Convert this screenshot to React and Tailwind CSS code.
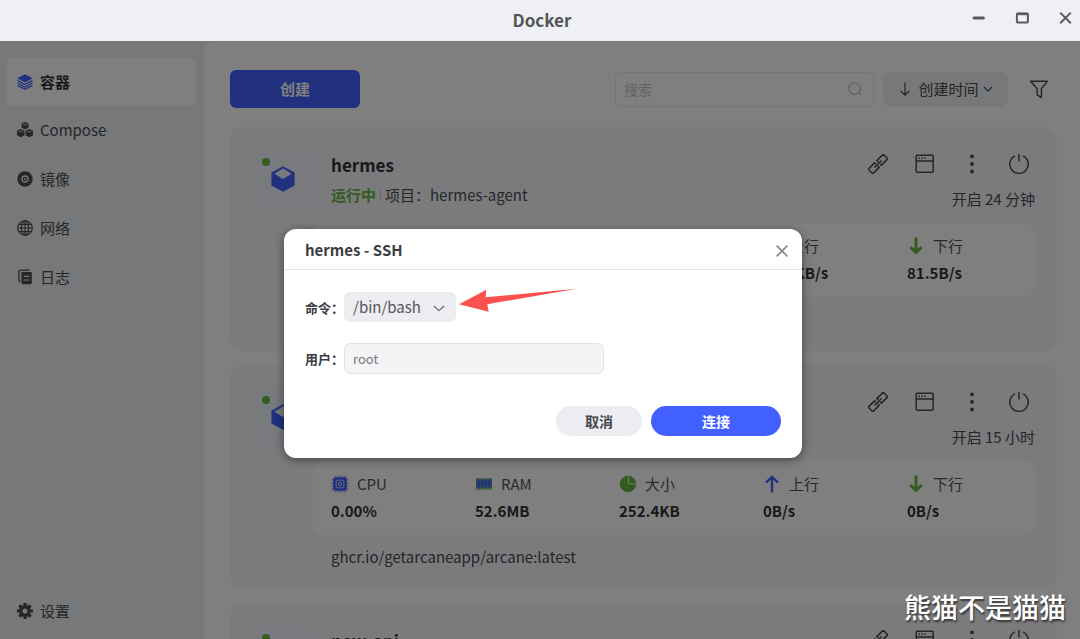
import React, { useState } from 'react';

const navItems = [
  { key: 'containers', label: '容器', icon: LayersIcon },
  { key: 'compose', label: 'Compose', icon: ComposeIcon },
  { key: 'images', label: '镜像', icon: DiscIcon },
  { key: 'networks', label: '网络', icon: GlobeIcon },
  { key: 'logs', label: '日志', icon: LogIcon },
];

const containers = [
  {
    name: 'hermes',
    project: 'hermes-agent',
    uptime: '开启 24 分钟',
    image: 'nousresearch/hermes-agent:latest',
    cpu: '0.12%',
    ram: '218.4MB',
    size: '1.2GB',
    up: '12.4KB/s',
    down: '81.5B/s',
  },
  {
    name: 'arcane',
    project: 'arcane',
    uptime: '开启 15 小时',
    image: 'ghcr.io/getarcaneapp/arcane:latest',
    cpu: '0.00%',
    ram: '52.6MB',
    size: '252.4KB',
    up: '0B/s',
    down: '0B/s',
  },
  {
    name: 'new-api',
    project: 'new-api',
    uptime: '开启 15 小时',
    image: 'calciumion/new-api:latest',
    cpu: '0.00%',
    ram: '48.1MB',
    size: '96.2KB',
    up: '0B/s',
    down: '0B/s',
  },
];

function LayersIcon() {
  return (
    <svg viewBox="0 0 16 16" className="size-4 text-[#4260ff]" fill="none" stroke="currentColor" strokeWidth="1.2">
      <path d="M8 0.2 15.7 4.3 8 8.6 0.3 4.3Z" fill="currentColor" stroke="none" />
      <path d="M0.5 6.6 8 10.6 15.5 6.6M0.5 9 8 13 15.5 9M0.5 11.4 8 15.4 15.5 11.4" />
    </svg>
  );
}

function ComposeIcon() {
  return (
    <svg viewBox="0 0 16 16" className="size-4" fill="currentColor">
      <path d="M8 0 11.5 1.6V5.6L8 7.4 4.5 5.6V1.6Z" />
      <path d="M3.7 7 7.5 8.7V13.2L3.7 15.2 0 13.2V8.7Z" />
      <path d="M12.3 7 16 8.7V13.2L12.3 15.2 8.5 13.2V8.7Z" />
      <path d="M6 2.1 8 2.9 10 2.1M1.6 9.2 3.7 10.1 5.9 9.2M10.1 9.2 12.3 10.1 14.4 9.2" fill="none" stroke="#eef0f4" strokeWidth="0.8" />
    </svg>
  );
}

function DiscIcon() {
  return (
    <svg viewBox="0 0 16 16" className="size-4" fill="none">
      <circle cx="8" cy="8" r="7.7" fill="currentColor" />
      <circle cx="8" cy="8" r="3" stroke="#eef0f4" strokeWidth="1.3" />
      <circle cx="8" cy="8" r="0.9" fill="#eef0f4" />
    </svg>
  );
}

function GlobeIcon() {
  return (
    <svg viewBox="0 0 16 16" className="size-4" fill="none" stroke="currentColor" strokeWidth="1.1">
      <circle cx="8" cy="8" r="7.3" />
      <ellipse cx="8" cy="8" rx="3.6" ry="7.3" />
      <path d="M8 0.7V15.3M0.7 8H15.3M1.7 4.4H14.3M1.7 11.6H14.3" />
    </svg>
  );
}

function LogIcon() {
  return (
    <svg viewBox="0 0 16 16" className="size-4" fill="none">
      <path d="M12.5 1.1H3.8Q2 1.1 2 2.8V11.6Q2 13 3.4 13" stroke="currentColor" strokeWidth="1.3" />
      <rect x="4.4" y="3" width="10.4" height="12.2" rx="1.4" fill="currentColor" />
      <path d="M6.8 7.4H12.4M6.8 11H12.4" stroke="#eef0f4" strokeWidth="1.2" />
    </svg>
  );
}

function GearIcon() {
  return (
    <svg viewBox="0 0 16 16" className="size-4" fill="none" stroke="currentColor">
      <circle cx="8" cy="8" r="4.2" strokeWidth="3.4" />
      <path d="M8 0V3M8 13V16M0 8H3M13 8H16M2.34 2.34 4.5 4.5M11.5 11.5 13.66 13.66M13.66 2.34 11.5 4.5M4.5 11.5 2.34 13.66" strokeWidth="3.2" />
    </svg>
  );
}

function CubeIcon() {
  return (
    <svg viewBox="0 0 24 26" className="h-[26px] w-6" fill="none">
      <path d="M12 0.3 23.6 6.6V19.4L12 25.7 0.4 19.4V6.6Z" fill="#4260ff" />
      <path d="M12 2.4 20.6 7.8 12 13 3.4 7.8Z" fill="#f3f5fb" />
    </svg>
  );
}

function LinkIcon() {
  return (
    <svg viewBox="0 0 20 20" className="size-5" fill="none" stroke="currentColor" strokeWidth="1.6" strokeLinejoin="round">
      <g transform="rotate(-45 10 10)">
        <path d="M8.4 11.4V13.2H-0.6V6.8H8.4V8.6" />
        <path d="M11.6 8.6V6.8H20.6V13.2H11.6V11.4" />
        <path d="M5 10H15" />
      </g>
    </svg>
  );
}

function WindowIcon() {
  return (
    <svg viewBox="0 0 20 20" className="size-5" fill="none" stroke="currentColor" strokeWidth="1.5">
      <rect x="1.2" y="1.2" width="17" height="17" rx="1" />
      <path d="M1.2 7H18.2" />
      <path d="M3.6 4.2H5M6.4 4.2H7.8M9.2 4.2H10.6" />
    </svg>
  );
}

function MoreIcon() {
  return (
    <svg viewBox="0 0 20 20" className="size-5" fill="currentColor">
      <circle cx="10" cy="2.4" r="1.9" />
      <circle cx="10" cy="10" r="1.9" />
      <circle cx="10" cy="17.5" r="1.9" />
    </svg>
  );
}

function PowerIcon() {
  return (
    <svg viewBox="0 0 20 20" className="size-5" fill="none" stroke="currentColor" strokeWidth="1.5">
      <path d="M6 1.9A9.2 9.2 0 1 0 14 1.9" />
      <path d="M10 0V7.4" />
    </svg>
  );
}

function CpuIcon() {
  return (
    <svg viewBox="0 0 18 18" className="size-[18px]" fill="none" stroke="#4260ff">
      <path d="M5 0V18M8 0V18M11 0V18M14 0V18M0 5H18M0 8H18M0 11H18M0 14H18" stroke="#8ea0ff" />
      <rect x="2.2" y="2.2" width="13.6" height="13.6" rx="1.5" fill="#4260ff" stroke="none" />
      <rect x="5.2" y="5.2" width="7.6" height="7.6" rx="1" stroke="#cfd7ff" />
      <circle cx="9" cy="9" r="1.6" stroke="#cfd7ff" />
    </svg>
  );
}

function RamIcon() {
  return (
    <svg viewBox="0 0 18 18" className="size-[18px]" fill="none">
      <rect x="1" y="3.5" width="16" height="10" fill="#5c8fb0" />
      <path d="M4 5.5V11M7.4 5.5V11M10.8 5.5V11M14.2 5.5V11" stroke="#4260ff" strokeWidth="2.2" />
      <path d="M1 4H17" stroke="#77a8a0" />
      <path d="M1 14H17" stroke="#6fbd4a" strokeWidth="2" strokeDasharray="1.5 1" />
    </svg>
  );
}

function PieIcon() {
  return (
    <svg viewBox="0 0 18 18" className="size-[18px]" fill="none">
      <circle cx="9" cy="9" r="8.2" fill="#67b83f" />
      <path d="M9.4 0.8V8.8H17.2" stroke="#dcefd3" strokeWidth="1.1" />
      <path d="M9.2 9.4 14.8 14.6" stroke="#4f9a30" />
    </svg>
  );
}

function UpIcon() {
  return (
    <svg viewBox="0 0 18 18" className="size-[18px]" fill="none" stroke="#4260ff" strokeWidth="2.4">
      <path d="M9 17.5V2M3 7.5 9 1.8 15 7.5" />
    </svg>
  );
}

function DownIcon() {
  return (
    <svg viewBox="0 0 18 18" className="size-[18px]" fill="none" stroke="#67b83f" strokeWidth="3">
      <path d="M9 0.5V15M3.4 10.2 9 15.4 14.6 10.2" />
    </svg>
  );
}

const Stat = ({ icon, label, value }) => (
  <div className="pl-[18px]">
    <dt className="flex h-6 items-center gap-2 text-[#555]">
      {icon}
      <span>{label}</span>
    </dt>
    <dd className="mt-[3px] leading-6 font-bold text-[#333]">{value}</dd>
  </div>
);

const ContainerCard = ({ container }) => (
  <li className="grid h-56 shrink-0 grid-cols-[60px_1fr] rounded-[14px] bg-[#f6f7fa] py-6 pr-[22px] pl-[23px]">
    <div className="relative flex h-[58px] w-[60px] items-center justify-center rounded-[14px] bg-[#f1f4fb] pb-0.5">
      <span className="absolute top-[7px] left-[9px] size-2 rounded-full bg-[#67b83f]" />
      <CubeIcon />
    </div>
    <div className="min-w-0">
      <div className="flex h-[72px] justify-between pl-[18px]">
        <div>
          <h2 className="text-[17px] leading-7 font-bold text-[#333]">{container.name}</h2>
          <p className="mt-0.5 flex h-7 items-center">
            <span className="font-bold text-[#67b83f]">运行中</span>
            <span className="mx-1 h-3.5 w-px bg-[#d5d7dc]" />
            <span>{`项目：${container.project}`}</span>
          </p>
        </div>
        <div className="flex flex-col items-end">
          <div className="flex gap-[27px] pt-[3px] pr-1.5">
            <button type="button" aria-label="链接"><LinkIcon /></button>
            <button type="button" aria-label="窗口"><WindowIcon /></button>
            <button type="button" aria-label="更多"><MoreIcon /></button>
            <button type="button" aria-label="电源"><PowerIcon /></button>
          </div>
          <span className="mt-[11px] leading-7">{container.uptime}</span>
        </div>
      </div>
      <dl className="grid h-[74px] grid-cols-5 rounded-xl bg-white py-[11px] pr-0.5">
        <Stat icon={<CpuIcon />} label="CPU" value={container.cpu} />
        <Stat icon={<RamIcon />} label="RAM" value={container.ram} />
        <Stat icon={<PieIcon />} label="大小" value={container.size} />
        <Stat icon={<UpIcon />} label="上行" value={container.up} />
        <Stat icon={<DownIcon />} label="下行" value={container.down} />
      </dl>
      <p className="mt-2 pl-[18px] leading-7">{container.image}</p>
    </div>
  </li>
);

const TitleBar = () => (
  <header className="relative flex h-[41px] shrink-0 items-center justify-center bg-[#eff0f5] pb-0.5 pl-1">
    <h1 className="text-[17px] font-bold text-[#555]">Docker</h1>
    <div className="absolute top-2.5 right-1.5 flex items-center gap-7 text-[#5a5a5a]">
      <button type="button" aria-label="最小化">
        <svg viewBox="0 0 16 16" className="size-4" stroke="currentColor" strokeWidth="3" strokeLinecap="round">
          <path d="M4 8H13.4" />
        </svg>
      </button>
      <button type="button" aria-label="最大化">
        <svg viewBox="0 0 16 16" className="size-4" fill="none" stroke="currentColor">
          <rect x="2.9" y="3.4" width="11" height="9.2" rx="0.8" strokeWidth="2" />
          <path d="M2.9 4H13.9" strokeWidth="2.4" />
        </svg>
      </button>
      <button type="button" aria-label="关闭">
        <svg viewBox="0 0 16 16" className="size-4" stroke="currentColor" strokeWidth="2">
          <path d="M2.2 2.6 12.8 13.2M12.8 2.6 2.2 13.2" />
        </svg>
      </button>
    </div>
  </header>
);

const Sidebar = () => (
  <nav className="flex w-[204px] shrink-0 flex-col justify-between pt-[17px] pr-2 pb-1 pl-1.5">
    <ul className="flex flex-col gap-px">
      {navItems.map(({ key, label, icon: Icon }, index) => (
        <li key={key}>
          <a
            href={`#${key}`}
            className={index === 0
              ? 'flex h-12 items-center gap-[7px] rounded-lg bg-white pl-[11px] font-bold text-[#333]'
              : 'flex h-12 items-center gap-[7px] rounded-lg pb-0.5 pl-[11px]'}
          >
            <Icon />
            {label}
          </a>
        </li>
      ))}
    </ul>
    <a href="#settings" className="flex h-12 items-center gap-[7px] rounded-lg pl-[11px]">
      <GearIcon />
      设置
    </a>
  </nav>
);

const Toolbar = () => (
  <div className="flex items-center justify-between">
    <button type="button" className="h-[38px] w-[130px] rounded-md bg-[#4260ff] font-bold text-white">创建</button>
    <div className="flex items-center pr-2">
      <label className="flex h-[35px] w-[259px] items-center rounded-md border border-[#e8eaee] px-2">
        <input type="search" aria-label="搜索" placeholder="搜索" className="min-w-0 flex-1 text-sm outline-none placeholder:text-[#bfc4cc]" />
        <svg viewBox="0 0 16 16" className="mr-0.5 size-4" fill="none" stroke="#b8bcc4" strokeWidth="1.1">
          <circle cx="7.6" cy="7.6" r="5.8" />
          <path d="M11.8 11.8 13.8 13.8" />
        </svg>
      </label>
      <button type="button" className="ml-[9px] flex h-[35px] w-[125px] items-center justify-center rounded-lg bg-[#eef0f4]">
        <svg viewBox="0 0 14 14" className="mr-1.5 size-3.5" fill="none" stroke="currentColor" strokeWidth="1.2">
          <path d="M7 0.5V13M2.6 8.8 7 13.2 11.4 8.8" />
        </svg>
        创建时间
        <svg viewBox="0 0 10 10" className="ml-1 size-2.5" fill="none" stroke="currentColor" strokeWidth="1.2">
          <path d="M1 3 5 7 9 3" />
        </svg>
      </button>
      <button type="button" aria-label="筛选" className="ml-[21px]">
        <svg viewBox="0 0 20 20" className="size-5" fill="none" stroke="currentColor" strokeWidth="1.4" strokeLinejoin="round">
          <path d="M1.6 2.2H18.4L12.4 9.8V18.6L8.2 15.8V9.8Z" />
        </svg>
      </button>
    </div>
  </div>
);

const SshDialog = ({ onClose }) => {
  const [command, setCommand] = useState('/bin/bash');
  const [user, setUser] = useState('root');

  return (
    <form
      role="dialog"
      aria-label="hermes - SSH"
      className="relative w-[518px] rounded-xl bg-white pb-[22px] shadow-[0_2px_10px_rgba(0,0,0,0.45)]"
    >
      <div className="flex h-[41px] items-center justify-between border-b border-[#e2e3e6] pt-1 pr-3 pl-[21px]">
        <h2 className="font-bold text-[#3c3c44]">hermes - SSH</h2>
        <button type="button" aria-label="关闭" onClick={onClose}>
          <svg viewBox="0 0 16 16" className="size-4" stroke="#85858f" strokeWidth="1.6">
            <path d="M2.6 2.6 13.4 13.4M13.4 2.6 2.6 13.4" />
          </svg>
        </button>
      </div>
      <div className="grid grid-cols-[39px_1fr] items-center gap-y-[21px] pt-[22px] pl-[21px]">
        <label htmlFor="command" className="pt-0.5 text-[13px] font-bold whitespace-nowrap text-[#3c3c44]">命令：</label>
        <div className="relative w-[112px]">
          <select
            id="command"
            value={command}
            onChange={(e) => setCommand(e.target.value)}
            className="h-[30px] w-full appearance-none rounded-md bg-[#ececf1] pt-0.5 pl-[9px] text-[#55555c]"
          >
            <option>/bin/bash</option>
            <option>/bin/sh</option>
          </select>
          <svg viewBox="0 0 12 12" className="pointer-events-none absolute top-2.5 right-[11px] size-3" fill="none" stroke="#606068" strokeWidth="1.1">
            <path d="M0.8 4 6 8.6 11.2 4" />
          </svg>
          {/* callout arrow pointing at the shell selector */}
          <svg viewBox="0 0 120 26" className="pointer-events-none absolute -top-1 left-[114px] h-[26px] w-[120px]" fill="#fb5050">
            <path d="M1 16.3 28.3 1.7 27.7 9.3 119 0.7 29.3 16.3 30.7 23.7Z" />
          </svg>
        </div>
        <label htmlFor="user" className="pt-0.5 text-[13px] font-bold whitespace-nowrap text-[#3c3c44]">用户：</label>
        <input
          id="user"
          type="text"
          value={user}
          onChange={(e) => setUser(e.target.value)}
          className="h-[31px] w-[260px] rounded-md border border-[#e3e3ea] bg-[#f4f4f6] px-2 text-[13px] text-[#77777e] outline-none"
        />
      </div>
      <div className="mt-8 flex justify-end gap-[9px] pr-[21px] text-sm font-bold">
        <button type="button" onClick={onClose} className="h-[30px] w-[86px] rounded-full bg-[#ececf1] text-[#48484f]">取消</button>
        <button type="button" className="h-[30px] w-[130px] rounded-full bg-[#4260ff] text-white">连接</button>
      </div>
    </form>
  );
};

export default function App() {
  const [open, setOpen] = useState(true);

  return (
    <div className="flex h-screen flex-col overflow-hidden bg-[#eef0f4] font-['Noto_Sans_CJK_SC',sans-serif] text-[15px] text-[#4a4c50]">
      <TitleBar />
      <div className="relative flex min-h-0 flex-1">
        <Sidebar />
        <main className="flex min-w-0 flex-1 flex-col overflow-hidden rounded-tl-xl bg-white pt-[29px] pr-[23px] pl-[26px]">
          <Toolbar />
          <ul className="mt-[19px] flex flex-col gap-3.5">
            {containers.map((container) => <ContainerCard key={container.name} container={container} />)}
          </ul>
        </main>
        {open && (
          <div className="absolute inset-0 flex items-center justify-center bg-black/50 pt-1.5 pl-1.5">
            <SshDialog onClose={() => setOpen(false)} />
          </div>
        )}
        <p className="pointer-events-none absolute right-3.5 bottom-3 text-[27px] leading-10 font-medium text-white [text-shadow:1px_2px_2px_rgba(0,0,0,0.6)]">
          熊猫不是猫猫
        </p>
      </div>
    </div>
  );
}
